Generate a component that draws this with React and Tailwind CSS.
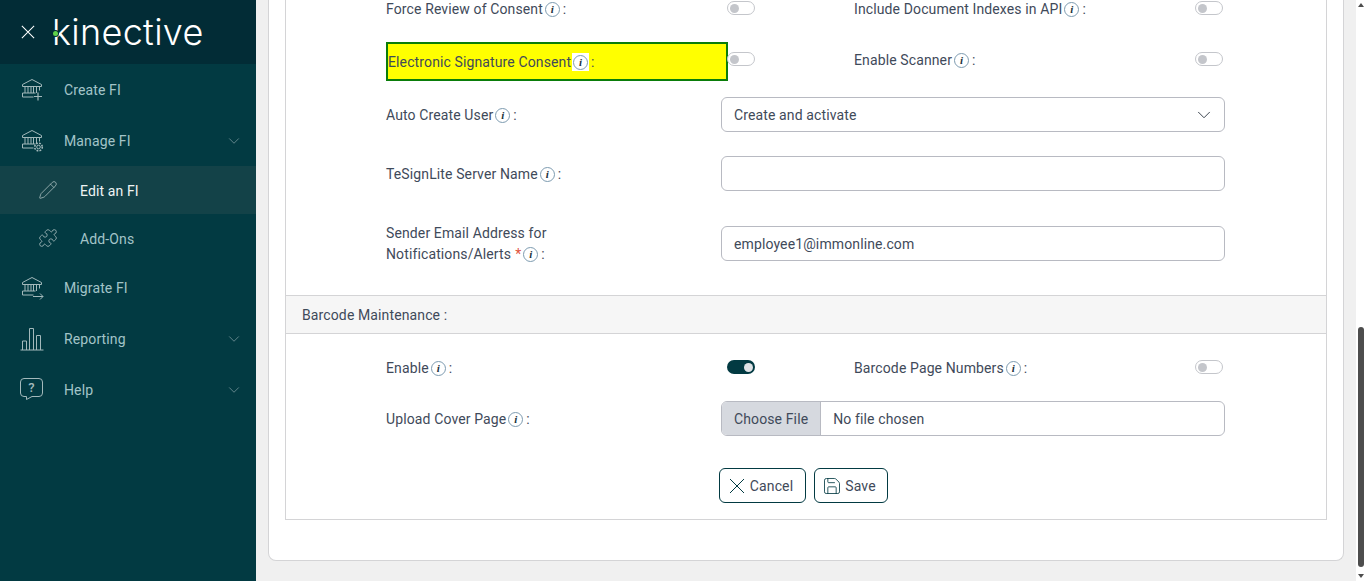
import React from 'react';
import { ChevronDown, Pencil, Puzzle, Save } from 'lucide-react';

const BankBase = ({ children }) => (
  <svg width="25" height="24" viewBox="0 0 25 24" fill="none" stroke="currentColor" strokeWidth="1" className="shrink-0">
    <path d="M2.500 6.500 12 1.500l9.500 5v2h-19z" />
    <path d="M5 8.500v6.500M8 8.500v6.500M11 8.500v6.500M13.500 8.500v6.500M16.500 8.500v6.500M19.500 8.500v4" />
    <path d="M2.500 15h13M2.500 15v4h11" />
    {children}
  </svg>
);

const CreateIcon = () => (
  <BankBase>
    <path d="M18 14.500v8M14 18.500h8" strokeWidth="1.200" />
  </BankBase>
);

const ManageIcon = () => (
  <BankBase>
    <circle cx="18.500" cy="18" r="1.800" />
    <circle cx="18.500" cy="18" r="3.800" strokeWidth="1.600" strokeDasharray="1.800 1.200" />
  </BankBase>
);

const MigrateIcon = () => (
  <BankBase>
    <path d="M13 20.500h10M20 17.500l3 3-3 3" />
  </BankBase>
);

const ReportIcon = () => (
  <svg width="25" height="24" viewBox="0 0 25 24" fill="none" stroke="currentColor" strokeWidth="1" className="shrink-0">
    <path d="M0.500 23h23M2.500 23v-9h4v9M9.500 23V1.500h4V23M16.500 23V8.500h4V23" />
  </svg>
);

const HelpIcon = () => (
  <div className="relative w-[25px] h-[24px] shrink-0">
    <svg width="25" height="24" viewBox="0 0 25 24" fill="none" stroke="currentColor" strokeWidth="1">
      <path d="M4 0.500h15a3.500 3.500 0 0 1 3.500 3.500v11a3.500 3.500 0 0 1-3.500 3.500h-7l-5.500 3v-3H4A3.500 3.500 0 0 1 0.500 15V4A3.500 3.500 0 0 1 4 0.500z" />
    </svg>
    <span className="absolute left-0 top-[1px] w-[23px] text-center text-[13px] leading-[17px] font-medium">?</span>
  </div>
);

const CloseIcon = ({ size, width = 1 }) => (
  <svg width={size} height={size} viewBox="0 0 16 16" fill="none" stroke="currentColor" strokeWidth={width} className="shrink-0">
    <path d="M1 1l14 14M15 1 1 15" />
  </svg>
);

const Info = ({ white }) => (
  <span className={`inline-flex items-center justify-center w-[17px] h-[18px] ml-[1px] ${white ? 'bg-white' : ''}`}>
    <span className="flex items-center justify-center w-[15px] h-[15px] rounded-full border border-[#7d9bb0] text-[#22323c] text-[11px] leading-none font-bold italic [font-family:'Liberation_Serif',serif]">i</span>
  </span>
);

const Toggle = ({ on }) => (
  on ? (
    <div className="w-[28px] h-[14px] rounded-full bg-[#023a42] flex items-center justify-end pr-[2px] shrink-0">
      <div className="w-[9px] h-[9px] rounded-full bg-[#dfe3e6]" />
    </div>
  ) : (
    <div className="w-[28px] h-[14px] rounded-full border border-[#c4c6cb] bg-white flex items-center pl-[2px] shrink-0">
      <div className="w-[9px] h-[9px] rounded-full bg-[#c4c6cb]" />
    </div>
  )
);

const Label = ({ text, white }) => (
  <span className="flex items-center whitespace-nowrap">
    {text}
    <Info white={white} />
    <span className="ml-[2px]">:</span>
  </span>
);

const ToggleRow = ({ left, right, leftOn, rightOn, className }) => (
  <div className={`flex items-center pl-[100px] ${className}`}>
    <div className="w-[341px] pt-[2px]"><Label text={left} /></div>
    <Toggle on={leftOn} />
    <div className="w-[341px] ml-[99px] pt-[2px]"><Label text={right} /></div>
    <Toggle on={rightOn} />
  </div>
);

const NavItem = ({ icon, label, chevron }) => (
  <div className="h-[51px] flex items-center pl-[20px] pr-[13px] text-[#a3c4c8]">
    <span className="text-[#a3b9bb]">{icon}</span>
    <span className="ml-[19px] flex-1 pt-[2px]">{label}</span>
    {chevron && <ChevronDown size={18} strokeWidth={0.900} className="text-[#8fa9ad]" />}
  </div>
);

const App = () => {
  return (
    <div className="flex h-[581px] w-[1366px] overflow-hidden text-[14px] tracking-[0.12px] [font-family:Roboto,sans-serif]">
      {/* Sidebar */}
      <aside className="w-[256px] shrink-0 bg-[#023a42]">
        <div className="h-[64px] bg-[#022c36] flex items-center pl-[21px] text-white">
          <CloseIcon size={14} width={1.200} />
          <div className="relative ml-[17px] text-[36px] leading-none font-light tracking-[0.3px] -mt-[1px] [font-family:Inter,sans-serif]">
            kinective
            <span className="absolute left-[1px] top-[17px] w-[5px] h-[5px] rounded-full bg-[#5fd14a] ring-1 ring-[#022c36]" />
          </div>
        </div>
        <div>
          <NavItem icon={<CreateIcon />} label="Create FI" />
          <NavItem icon={<ManageIcon />} label="Manage FI" chevron />
          <div className="h-[48px] bg-[#134248] flex items-center pl-[38px] text-[#eef4f4]">
            <Pencil size={20} strokeWidth={1} className="text-[#a3b9bb]" />
            <span className="ml-[22px] pt-[2px]">Edit an FI</span>
          </div>
          <div className="h-[48px] flex items-center pl-[38px] text-[#a3c4c8]">
            <Puzzle size={20} strokeWidth={1} className="text-[#a3b9bb]" />
            <span className="ml-[22px] pt-[2px]">Add-Ons</span>
          </div>
          <NavItem icon={<MigrateIcon />} label="Migrate FI" />
          <NavItem icon={<ReportIcon />} label="Reporting" chevron />
          <NavItem icon={<HelpIcon />} label="Help" chevron />
        </div>
      </aside>

      {/* Main */}
      <main className="flex-1 bg-[#f0f0f0] pl-[12px] pr-[12px] min-w-0">
        <div className="bg-white border border-t-0 border-[#d4d4d6] rounded-b-[8px] h-[561px] pl-[16px] pr-[16px] text-[#3f4a5a]">
          <div className="border border-t-0 border-[#d4d4d6] h-[520px]">
            <ToggleRow left="Force Review of Consent" right="Include Document Indexes in API" className="h-[16px]" />

            <div className="flex items-start pl-[100px] mt-[26px] h-[39px]">
              <div className="w-[342px] h-[39px] shrink-0 border-2 border-[#0a7d0a] bg-[#ffff00] flex items-center pt-[1px]">
                <Label text="Electronic Signature Consent" white />
              </div>
              <div className="-ml-[1px] mt-[10px]"><Toggle /></div>
              <div className="w-[341px] ml-[99px] mt-[8px]"><Label text="Enable Scanner" /></div>
              <div className="mt-[10px]"><Toggle /></div>
            </div>

            <div className="flex items-center pl-[100px] mt-[16px]">
              <div className="w-[335px] pt-[2px]"><Label text="Auto Create User" /></div>
              <div className="w-[504px] h-[35px] border border-[#b8bac2] rounded-[6px] flex items-center justify-between pl-[12px] pr-[9px]">
                <span className="pt-[1px]">Create and activate</span>
                <ChevronDown size={22} strokeWidth={1} className="text-[#2b3440]" />
              </div>
            </div>

            <div className="flex items-center pl-[100px] mt-[24px]">
              <div className="w-[335px] pt-[2px]"><Label text="TeSignLite Server Name" /></div>
              <input readOnly className="w-[504px] h-[35px] border border-[#b8bac2] rounded-[6px] px-[12px]" />
            </div>

            <div className="flex items-center pl-[100px] mt-[30px]">
              <div className="w-[335px] leading-[21px] pt-[2px]">
                <div>Sender Email Address for</div>
                <div className="flex items-center">
                  Notifications/Alerts<span className="text-[#e0533d] ml-[4px]">*</span>
                  <Info />
                  <span className="ml-[2px]">:</span>
                </div>
              </div>
              <input readOnly value="employee1@immonline.com" className="w-[504px] h-[35px] border border-[#b8bac2] rounded-[6px] px-[12px] pt-[2px]" />
            </div>

            <div className="mt-[30px] h-[39px] bg-[#f6f6f6] border-y border-[#d4d4d6] flex items-center pl-[16px] pt-[2px]">
              Barcode Maintenance :
            </div>

            <ToggleRow left="Enable" right="Barcode Page Numbers" leftOn className="h-[16px] mt-[25px]" />

            <div className="flex items-center pl-[100px] mt-[26px]">
              <div className="w-[335px] pt-[2px]"><Label text="Upload Cover Page" /></div>
              <div className="w-[504px] h-[35px] border border-[#b8bac2] rounded-[6px] flex items-center overflow-hidden">
                <div className="h-full bg-[#d6d9df] border-r border-[#b8bac2] flex items-center px-[12px] pt-[2px]">Choose File</div>
                <span className="ml-[12px] pt-[2px]">No file chosen</span>
              </div>
            </div>

            <div className="flex justify-center gap-[8px] mt-[32px] pr-[6px]">
              <button className="w-[87px] h-[35px] border border-[#023a42] rounded-[6px] flex items-center justify-center gap-[5px] pr-[2px]">
                <span className="text-[#023a42]"><CloseIcon size={16} /></span>
                <span className="pt-[1px]">Cancel</span>
              </button>
              <button className="w-[74px] h-[35px] border border-[#023a42] rounded-[6px] flex items-center justify-center gap-[3px] pr-[3px]">
                <Save size={20} strokeWidth={1} className="text-[#023a42]" />
                <span className="pt-[1px]">Save</span>
              </button>
            </div>
          </div>
        </div>
      </main>

      {/* Scrollbar */}
      <div className="w-[10px] shrink-0 bg-white relative">
        <div className="absolute left-[2px] top-[3px] w-0 h-0 border-x-[3px] border-x-transparent border-b-[4px] border-b-[#4d4d4d]" />
        <div className="absolute left-[2px] top-[327px] w-[6px] h-[240px] rounded-full bg-[#4d4d4d]" />
        <div className="absolute left-[2px] bottom-[3px] w-0 h-0 border-x-[3px] border-x-transparent border-t-[4px] border-t-[#4d4d4d]" />
      </div>
    </div>
  );
};

export default App;
